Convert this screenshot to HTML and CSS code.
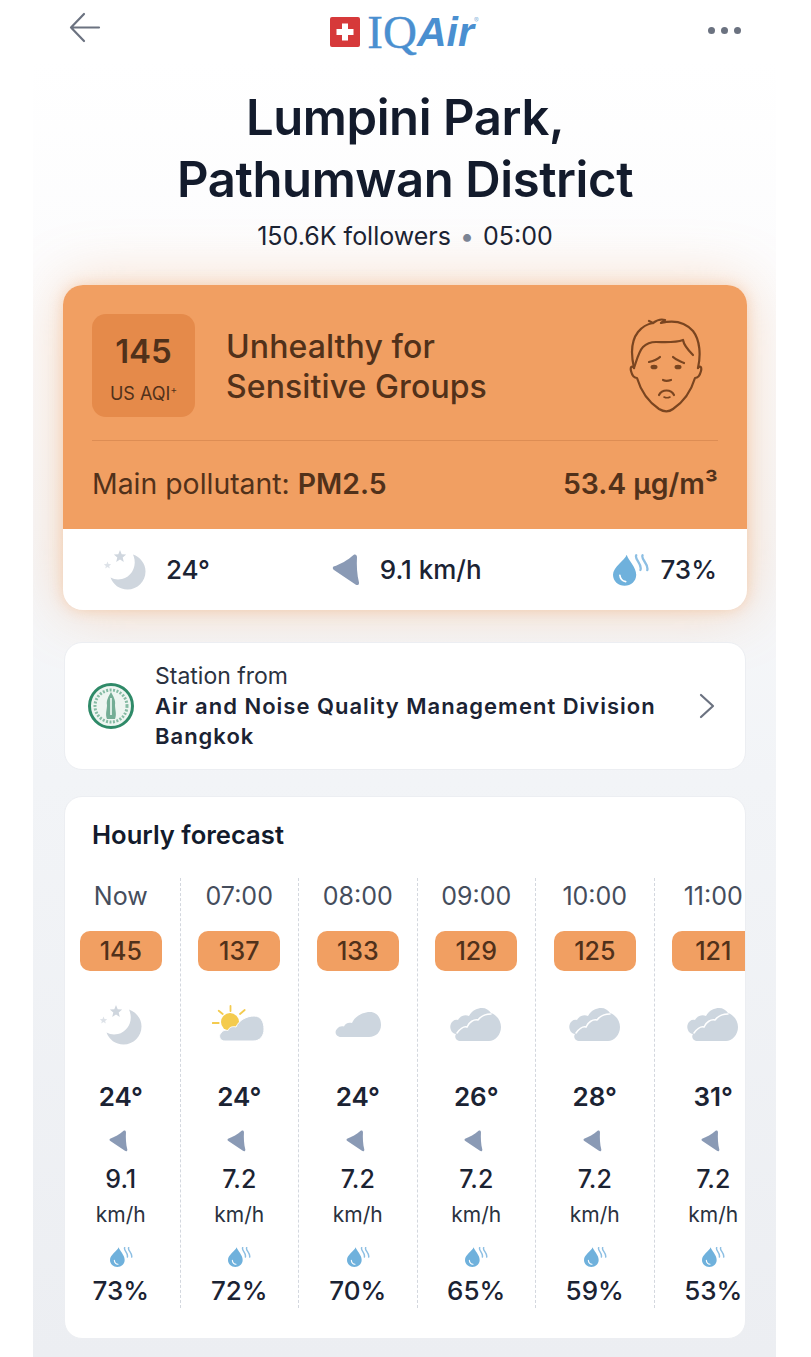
FILE: index.html
```html
<!DOCTYPE html>
<html lang="en">
<head>
    <meta charset="UTF-8">
    <meta name="viewport" content="width=device-width, initial-scale=1.0">
    <title>Lumpini Park air quality</title>
    <link rel="stylesheet" href="styles.css">
</head>
<body>

    <!-- shared icons -->
    <svg class="icon-defs" aria-hidden="true">
        <symbol id="moon" viewBox="0 0 44 40">
            <path d="M30 4.500C37 7 42.500 13.500 42.500 21.500C42.500 31.500 34.500 39.500 24.500 39.500C16.500 39.500 10 34.500 7.500 27.500C11 29.500 15 30 19 29C27.500 27 33 18.500 31.500 9.500C31.200 7.800 30.700 6 30 4.500Z" fill="#cfd6de"/>
            <path d="M17 0L18.700 4.300L23.200 4.600L19.700 7.500L20.800 12L17 9.500L13.200 12L14.300 7.500L10.800 4.600L15.300 4.300Z" fill="#cfd6de"/>
            <path d="M4.500 11.500L5.500 14L8.200 14.200L6.100 15.900L6.800 18.500L4.500 17L2.200 18.500L2.900 15.900L0.800 14.200L3.500 14Z" fill="#dde2e8"/>
        </symbol>
        <symbol id="sun-cloud" viewBox="-3 -4 54 40">
            <path d="M15.500 -3V2M3.700 1.700L7.700 5M-2.300 14H3.700M29.700 1L25 5" stroke="#f4cb4e" stroke-width="1.800" stroke-linecap="round" fill="none"/>
            <circle cx="15" cy="13" r="9" fill="#f4cb4e"/>
            <path d="M10 32C5 32 3 27 6 24C8 21 11 21 13 21.500C14 18 18 17 21 18C24 11 32 7 39 7C46 7 49 13 49 20C49 27 45 32 38 32Z" fill="#cdd6df" stroke="#fff" stroke-width="1"/>
        </symbol>
        <symbol id="cloud" viewBox="0 0 54 40">
            <path d="M10 32C5 32 3 27 6 24C8 21 11 21 13 21.500C14 18 18 17 21 18C24 11 32 7 39 7C46 7 50 13 50 20C50 27 45 32 38 32Z" fill="#cdd6df"/>
        </symbol>
        <symbol id="clouds" viewBox="0 0 54 40">
            <path d="M12 36C7 36 5 32 7 29C3 29 0.500 24 1.500 20C2.500 16 6 14 9 15C11 11 16 9 20 11C23 5 29 3 33 3C37 3 40 5 42 8C48 10 52 16 52 22C52 30 46 36 40 36Z" fill="#cdd6df"/>
            <path d="M8 28C11 24 15 21 18 22C20 17 25 14 29 15C32 11 37 9 42 9" stroke="#fff" stroke-width="1.500" fill="none" stroke-linecap="round"/>
        </symbol>
        <symbol id="wind" viewBox="0 0 28 32">
            <path d="M1.500 12.500C8 10.500 16 6 21.500 1C23.500 0 24.800 1 25 3C24.500 11 25 21 27 28.500C27.300 30.800 25.500 31.800 23.500 30.500L2 16C0.600 15 0.400 13.300 1.500 12.500Z" fill="#8a9ab5"/>
        </symbol>
        <symbol id="drop" viewBox="0 0 36 30">
            <path d="M13 0.500C14.500 6 22 12 22 19.500C22 25.500 17 30 11 30C5 30 0 25.500 0 19.500C0 12 11 6 13 0.500Z" fill="#6fb1dc"/>
            <path d="M6.500 20C6.800 23 9 25.500 12 26" stroke="#fff" stroke-width="1.600" stroke-linecap="round" fill="none"/>
            <path d="M22 1C20 5 28 9 26 15M28 1C26 5 34 9 32.500 15" stroke="#8dbfe3" stroke-width="2.200" stroke-linecap="round" fill="none"/>
        </symbol>
    </svg>

    <header class="top-nav">
        <svg class="back-icon" viewBox="0 0 32 32"><path d="M15 2L2 15.500L15 29M2 15.500H30" stroke="#6b7280" stroke-width="2.200" fill="none" stroke-linecap="round" stroke-linejoin="round"/></svg>
        <div class="logo">
            <svg class="logo-flag" viewBox="0 0 30 30"><rect width="30" height="30" rx="2" fill="#d6393a"/><path d="M12 6.500H18V12H23.500V18H18V23.500H12V18H6.500V12H12Z" fill="#fff"/></svg>
            <span class="logo-iq">IQ</span><span class="logo-air">Air</span><span class="logo-reg">®</span>
        </div>
        <div class="more-dots"><span></span><span></span><span></span></div>
    </header>

    <main class="panel">
        <h1>Lumpini Park,<br>Pathumwan District</h1>
        <p class="followers">150.6K followers <span class="dot">•</span> 05:00</p>

        <section class="aqi-card">
            <div class="aqi-head">
                <div class="aqi-top">
                    <div class="aqi-box">
                        <strong>145</strong>
                        <span>US AQI<sup>+</sup></span>
                    </div>
                    <div class="aqi-status">Unhealthy for<br>Sensitive Groups</div>
                    <svg class="face" viewBox="0 0 74 96" fill="none" stroke="#7a4520" stroke-width="2.200" stroke-linecap="round" stroke-linejoin="round">
                        <path d="M5 51C2 38 2 24 9 15C13 10 18 7 24 6L20 4M24 6C28 3 33 2 36 3L32 6C44 3 56 5 64 14C71 23 72 38 69 51"/>
                        <path d="M5 51C8 42 10 34 14 30C18 26 22 25 27 25C36 25 46 26 54 23C55 29 60 34 64 38"/>
                        <path d="M5 51C3 48 1 50 2 54C3 58 5 61 8 61C11 71 18 84 30 92C35 95 40 95 44 92C56 84 63 71 66 61C69 61 71 58 72 54C73 50 71 48 69 51"/>
                        <path d="M20 45C24 44 28 43 31 40M44 40C47 43 51 44 55 46"/>
                        <path d="M34 63C36 64 39 64 42 63"/>
                        <path d="M30 78C33 72 42 72 45 78"/>
                        <path d="M35 80C37 81 39 81 41 80" stroke-width="1.600"/>
                        <ellipse cx="25" cy="50" rx="3.500" ry="2.300" fill="#7a4520" stroke="none"/>
                        <ellipse cx="49" cy="50" rx="3.500" ry="2.300" fill="#7a4520" stroke="none"/>
                    </svg>
                </div>
                <div class="aqi-pollutant">
                    <span>Main pollutant: <b>PM2.5</b></span>
                    <b>53.4 µg/m³</b>
                </div>
            </div>
            <div class="aqi-foot">
                <div class="foot-item foot-temp"><svg class="foot-moon"><use href="#moon"/></svg>24°</div>
                <div class="foot-item foot-wind"><svg class="foot-arrow"><use href="#wind"/></svg>9.1 km/h</div>
                <div class="foot-item foot-hum"><svg class="foot-drop"><use href="#drop"/></svg>73%</div>
            </div>
        </section>

        <section class="station-card">
            <svg class="seal" viewBox="0 0 46 46">
                <circle cx="23" cy="23" r="21.500" fill="#eef5f1" stroke="#2f8a68" stroke-width="3"/>
                <circle cx="23" cy="23" r="16" fill="none" stroke="#86bba4" stroke-width="3" stroke-dasharray="2 1.500"/>
                <path d="M23 9C25 13 28 17 27 22C27 27 29 31 27 36H19C17 31 19 27 19 22C18 17 21 13 23 9Z" fill="#74ad95"/>
                <path d="M23 15V32" stroke="#d9ebe2" stroke-width="2"/>
            </svg>
            <div class="station-text">
                <span>Station from</span>
                <b>Air and Noise Quality Management Division<br>Bangkok</b>
            </div>
            <svg class="chevron" viewBox="0 0 16 26"><path d="M2 2L14 13L2 24" stroke="#6b7280" stroke-width="2.200" fill="none" stroke-linecap="round" stroke-linejoin="round"/></svg>
        </section>

        <section class="hourly-card">
            <h2>Hourly forecast</h2>
            <div class="hourly-track">
                <div class="hour">
                    <div class="hour-time">Now</div>
                    <div class="hour-aqi">145</div>
                    <svg class="hour-icon"><use href="#moon"/></svg>
                    <div class="hour-temp">24°</div>
                    <svg class="hour-wind"><use href="#wind"/></svg>
                    <div class="hour-speed">9.1</div>
                    <div class="hour-unit">km/h</div>
                    <svg class="hour-drop"><use href="#drop"/></svg>
                    <div class="hour-hum">73%</div>
                </div>
                <div class="hour">
                    <div class="hour-time">07:00</div>
                    <div class="hour-aqi">137</div>
                    <svg class="hour-icon"><use href="#sun-cloud"/></svg>
                    <div class="hour-temp">24°</div>
                    <svg class="hour-wind"><use href="#wind"/></svg>
                    <div class="hour-speed">7.2</div>
                    <div class="hour-unit">km/h</div>
                    <svg class="hour-drop"><use href="#drop"/></svg>
                    <div class="hour-hum">72%</div>
                </div>
                <div class="hour">
                    <div class="hour-time">08:00</div>
                    <div class="hour-aqi">133</div>
                    <svg class="hour-icon"><use href="#cloud"/></svg>
                    <div class="hour-temp">24°</div>
                    <svg class="hour-wind"><use href="#wind"/></svg>
                    <div class="hour-speed">7.2</div>
                    <div class="hour-unit">km/h</div>
                    <svg class="hour-drop"><use href="#drop"/></svg>
                    <div class="hour-hum">70%</div>
                </div>
                <div class="hour">
                    <div class="hour-time">09:00</div>
                    <div class="hour-aqi">129</div>
                    <svg class="hour-icon"><use href="#clouds"/></svg>
                    <div class="hour-temp">26°</div>
                    <svg class="hour-wind"><use href="#wind"/></svg>
                    <div class="hour-speed">7.2</div>
                    <div class="hour-unit">km/h</div>
                    <svg class="hour-drop"><use href="#drop"/></svg>
                    <div class="hour-hum">65%</div>
                </div>
                <div class="hour">
                    <div class="hour-time">10:00</div>
                    <div class="hour-aqi">125</div>
                    <svg class="hour-icon"><use href="#clouds"/></svg>
                    <div class="hour-temp">28°</div>
                    <svg class="hour-wind"><use href="#wind"/></svg>
                    <div class="hour-speed">7.2</div>
                    <div class="hour-unit">km/h</div>
                    <svg class="hour-drop"><use href="#drop"/></svg>
                    <div class="hour-hum">59%</div>
                </div>
                <div class="hour">
                    <div class="hour-time">11:00</div>
                    <div class="hour-aqi">121</div>
                    <svg class="hour-icon"><use href="#clouds"/></svg>
                    <div class="hour-temp">31°</div>
                    <svg class="hour-wind"><use href="#wind"/></svg>
                    <div class="hour-speed">7.2</div>
                    <div class="hour-unit">km/h</div>
                    <svg class="hour-drop"><use href="#drop"/></svg>
                    <div class="hour-hum">53%</div>
                </div>
            </div>
        </section>
    </main>

</body>
</html>
```

FILE: styles.css
```css
* {
    box-sizing: border-box;
}

html, body {
    height: 1357px;
    overflow: hidden;
}

body {
    margin: 0;
    background-color: #fff;
    font-family: Inter, "Liberation Sans", sans-serif;
    color: #1b2333;
}

.icon-defs {
    display: none;
}

/* top bar */
.top-nav {
    height: 60px;
    padding: 12px 70px 0 69px;
    display: flex;
    justify-content: space-between;
    align-items: flex-start;
}

.back-icon {
    width: 32px;
    height: 32px;
}

.logo {
    height: 40px;
    display: flex;
    align-items: center;
}

.logo-flag {
    width: 30px;
    height: 30px;
    margin-right: 7px;
    margin-top: -1px;
}

.logo-iq {
    font-family: "Liberation Serif", serif;
    font-size: 47px;
    color: #4a8fd0;
    -webkit-text-stroke: 0.4px #4a8fd0;
}

.logo-air {
    font-family: "Liberation Sans", sans-serif;
    font-weight: 700;
    font-style: italic;
    font-size: 41px;
    color: #4a8fd0;
}

.logo-reg {
    font-size: 7px;
    color: #8fb8de;
    align-self: flex-start;
    margin-top: 4px;
}

.more-dots {
    display: flex;
    gap: 6px;
    padding-top: 15px;
}

.more-dots span {
    width: 7px;
    height: 7px;
    border-radius: 50%;
    background-color: #6b7280;
}

/* main panel */
.panel {
    height: 1297px;
    margin: 0 35px 0 33px;
    padding: 27px 29px 0 30px;
    overflow: hidden;
    background: linear-gradient(#fff 0, #fcfcfd 200px, #f2f4f7 720px, #eceef2 1297px);
}

h1 {
    margin: 0;
    font-size: 49px;
    font-weight: 600;
    line-height: 62px;
    text-align: center;
    color: #131b2c;
    letter-spacing: -0.4px;
}

.followers {
    margin: 10px 0 0;
    font-size: 25px;
    line-height: 30px;
    text-align: center;
}

.followers .dot {
    color: #7b8494;
    margin: 0 2px;
}

/* AQI card */
.aqi-card {
    margin-top: 34px;
    border-radius: 20px;
    overflow: hidden;
    background-color: #fff;
    box-shadow: 0 0 14px rgba(240, 155, 90, 0.34), 0 0 60px rgba(240, 155, 90, 0.36);
}

.aqi-head {
    height: 244px;
    padding: 29px 29px 0;
    background-color: #f19f62;
    color: #51311a;
}

.aqi-top {
    height: 127px;
    display: flex;
    border-bottom: 1px solid #dd8d54;
}

.aqi-box {
    width: 103px;
    height: 103px;
    border-radius: 14px;
    background-color: #e58a4a;
    display: flex;
    flex-direction: column;
    align-items: center;
    padding-top: 17px;
}

.aqi-box strong {
    font-size: 33px;
    line-height: 40px;
    font-weight: 600;
}

.aqi-box span {
    font-size: 18px;
    line-height: 24px;
    margin-top: 11px;
}

.aqi-box sup {
    font-size: 10px;
    line-height: 0;
}

.aqi-status {
    margin-left: 31px;
    font-size: 32px;
    font-weight: 500;
    line-height: 40px;
    padding-top: 13px;
    letter-spacing: 0.1px;
    flex: 1;
}

.face {
    width: 74px;
    height: 96px;
    margin-top: 3px;
    margin-right: 15px;
}

.aqi-pollutant {
    display: flex;
    justify-content: space-between;
    align-items: center;
    height: 84px;
    font-size: 28.4px;
}

.aqi-pollutant b {
    font-weight: 600;
}

.aqi-foot {
    height: 81px;
    display: flex;
    justify-content: space-between;
    align-items: center;
    font-size: 26px;
    font-weight: 500;
    padding: 0 30px 0 40px;
}

.foot-item {
    display: flex;
    align-items: center;
}

.foot-moon {
    width: 44px;
    height: 40px;
    margin-right: 19px;
}

.foot-arrow {
    width: 28px;
    height: 32px;
    margin-right: 20px;
}

.foot-drop {
    width: 38px;
    height: 32px;
    margin-right: 9px;
}

.foot-wind {
    margin-left: -10px;
}

/* station card */
.station-card {
    height: 128px;
    margin: 32px 1px 0;
    padding: 0 30px 0 23px;
    display: flex;
    align-items: center;
    background-color: #fff;
    border: 1px solid #eceef2;
    border-radius: 18px;
}

.seal {
    width: 46px;
    height: 46px;
    flex-shrink: 0;
}

.station-text {
    margin-left: 21px;
    flex: 1;
}

.station-text span {
    display: block;
    font-size: 23px;
    line-height: 30px;
    color: #2a3240;
}

.station-text b {
    display: block;
    font-size: 22px;
    font-weight: 600;
    line-height: 30px;
    letter-spacing: 1px;
}

.chevron {
    width: 16px;
    height: 26px;
}

/* hourly */
.hourly-card {
    height: 543px;
    margin: 26px 1px 0;
    background-color: #fff;
    border: 1px solid #eceef2;
    border-radius: 18px;
    overflow: hidden;
    padding-top: 21px;
}

h2 {
    margin: 0 0 0 27px;
    font-size: 25.6px;
    font-weight: 600;
    line-height: 34px;
    color: #131b2c;
}

.hourly-track {
    display: flex;
    margin-top: 26px;
    margin-left: -3px;
}

.hour {
    width: 118.5px;
    height: 430px;
    flex-shrink: 0;
    display: flex;
    flex-direction: column;
    align-items: center;
    border-right: 1px dashed #d3d7de;
}

.hour-time {
    font-size: 25px;
    line-height: 37px;
    color: #454d5c;
}

.hour-aqi {
    width: 82px;
    height: 40px;
    margin-top: 16px;
    border-radius: 10px;
    background-color: #f19f62;
    color: #51311a;
    font-size: 25px;
    font-weight: 500;
    line-height: 40px;
    text-align: center;
}

.hour-icon {
    width: 54px;
    height: 40px;
    margin-top: 34px;
}

.hour-temp {
    font-size: 26px;
    font-weight: 600;
    line-height: 32px;
    margin-top: 36px;
}

.hour-wind {
    width: 19px;
    height: 22px;
    margin-top: 17px;
    margin-right: 5px;
}

.hour-speed {
    font-size: 25px;
    font-weight: 500;
    line-height: 32px;
    margin-top: 11px;
}

.hour-unit {
    font-size: 21px;
    line-height: 28px;
    margin-top: 6px;
    color: #2a3240;
}

.hour-drop {
    width: 24px;
    height: 20px;
    margin-top: 18px;
    margin-left: 2px;
}

.hour-hum {
    font-size: 26px;
    font-weight: 500;
    line-height: 32px;
    margin-top: 8px;
}
```
